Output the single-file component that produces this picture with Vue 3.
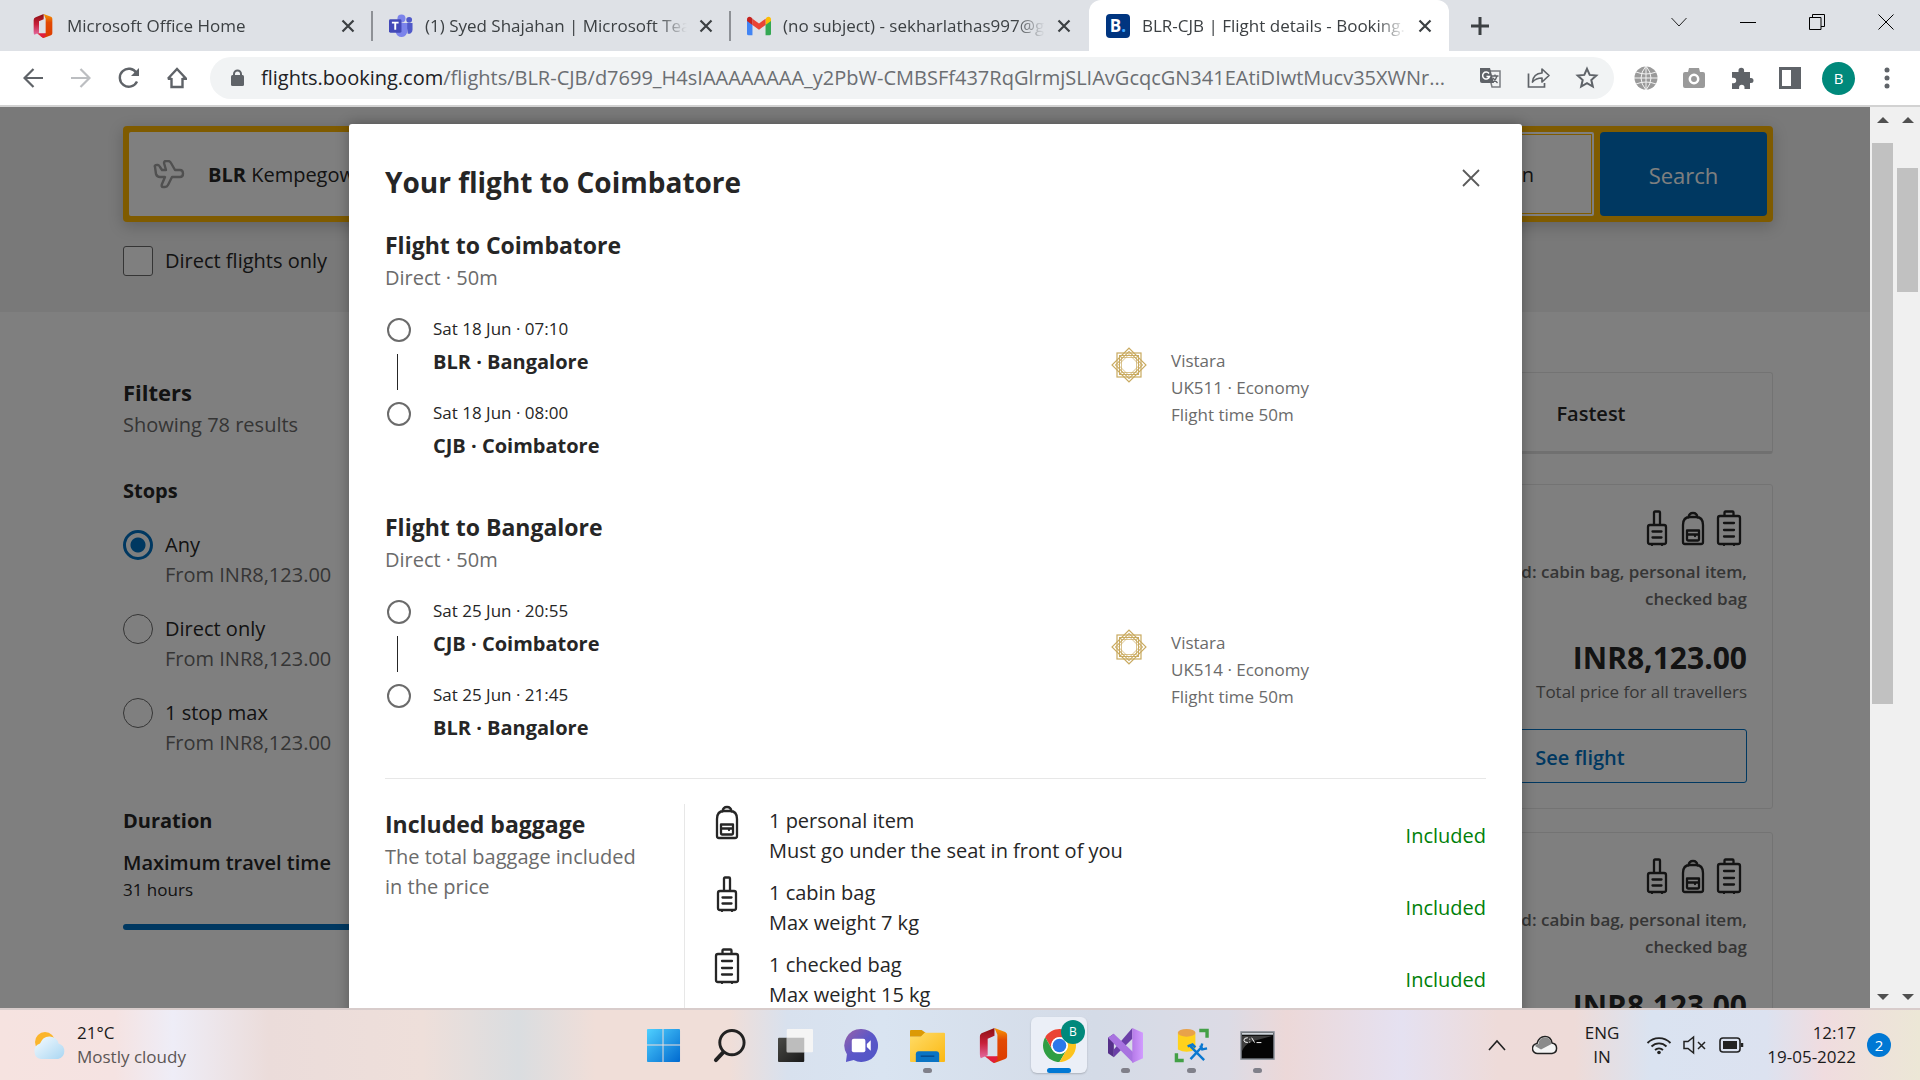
<script setup>
import { ref } from 'vue'

const tabs = [
  { icon: 'office', title: 'Microsoft Office Home' },
  { icon: 'teams', title: '(1) Syed Shajahan | Microsoft Teams' },
  { icon: 'gmail', title: '(no subject) - sekharlathas997@gmail.com' },
  { icon: 'booking', title: 'BLR-CJB | Flight details - Booking.com', active: true }
]

const urlPath = ref('/flights/BLR-CJB/d7699_H4sIAAAAAAAA_y2PbW-CMBSFf437RqGlrmjSLIAvGcqcGN341EAtiDIwtMucv35XWNr...')

const stops = [
  { id: 'any', label: 'Any' },
  { id: 'direct', label: 'Direct only' },
  { id: 'one', label: '1 stop max' }
]
const stop = ref('any')
const direct = ref(false)
const maxHours = ref(31)

const segments = [
  {
    title: 'Flight to Coimbatore',
    flight: 'UK511',
    points: [
      { time: 'Sat 18 Jun · 07:10', city: 'BLR · Bangalore' },
      { time: 'Sat 18 Jun · 08:00', city: 'CJB · Coimbatore' }
    ]
  },
  {
    title: 'Flight to Bangalore',
    flight: 'UK514',
    points: [
      { time: 'Sat 25 Jun · 20:55', city: 'CJB · Coimbatore' },
      { time: 'Sat 25 Jun · 21:45', city: 'BLR · Bangalore' }
    ]
  }
]

const bags = [
  { icon: 'backpack', name: '1 personal item', note: 'Must go under the seat in front of you' },
  { icon: 'cabin', name: '1 cabin bag', note: 'Max weight 7 kg' },
  { icon: 'suitcase', name: '1 checked bag', note: 'Max weight 15 kg' }
]

const apps = [
  { icon: 'windows', label: 'Start' },
  { icon: 'magnifier', label: 'Search' },
  { icon: 'taskview', label: 'Task view' },
  { icon: 'chat', label: 'Chat' },
  { icon: 'folder', label: 'File Explorer', open: true },
  { icon: 'office', label: 'Office' },
  { icon: 'chrome', label: 'Chrome', active: true },
  { icon: 'vs', label: 'Visual Studio', open: true },
  { icon: 'ssms', label: 'SQL Server Management Studio', open: true },
  { icon: 'cmd', label: 'Command Prompt', open: true }
]
</script>

<template>
  <div class="desktop">
    <svg class="sprite" aria-hidden="true">
      <defs>
        <linearGradient id="gOffL" x1="0" y1="0" x2="0" y2="1"><stop offset="0" stop-color="#8a0f12" /><stop offset=".5" stop-color="#c8203a" /><stop offset="1" stop-color="#e36aa0" /></linearGradient>
        <linearGradient id="gOffR" x1="0" y1="0" x2="0" y2="1"><stop offset="0" stop-color="#f89a05" /><stop offset=".35" stop-color="#e24a03" /><stop offset="1" stop-color="#dc3b00" /></linearGradient>
        <linearGradient id="gWin" x1="0" y1="0" x2="1" y2="1"><stop offset="0" stop-color="#4fd0ff" /><stop offset="1" stop-color="#0069cf" /></linearGradient>
        <linearGradient id="gChat" x1="0" y1="0" x2="1" y2="1"><stop offset="0" stop-color="#9a62a8" /><stop offset=".5" stop-color="#5b57c8" /><stop offset="1" stop-color="#4f55c6" /></linearGradient>
        <linearGradient id="gFolder" x1="0" y1="0" x2="1" y2="1"><stop offset="0" stop-color="#ffdc68" /><stop offset="1" stop-color="#fbb812" /></linearGradient>
        <linearGradient id="gCloud" x1="0" y1="0" x2="1" y2="1"><stop offset="0" stop-color="#f6fbff" /><stop offset="1" stop-color="#a9d6f2" /></linearGradient>
        <linearGradient id="gDark" x1="0" y1="0" x2="1" y2="1"><stop offset="0" stop-color="#4a4a46" /><stop offset="1" stop-color="#191919" /></linearGradient>
        <linearGradient id="gVs" x1="0" y1="0" x2="1" y2="0"><stop offset="0" stop-color="#b57ae8" /><stop offset="1" stop-color="#d29cff" /></linearGradient>
      </defs>
      <symbol id="i-office" viewBox="0 0 28 36">
        <path d="M15 0v8l-7 3v17l-7 3q-1-1-1-4V9q0-3 3-4z" fill="url(#gOffL)" />
        <path d="M15 0 26 4q2 1 2 3v22q0 2-2 3l-11 4-5-3 8-4V7z" fill="url(#gOffR)" />
        <path d="M5 29h13v4l-4 3z" fill="#e01e3c" />
      </symbol>
      <symbol id="i-teams" viewBox="0 0 25 24">
        <circle cx="21" cy="5.5" r="3" fill="#5059c9" /><circle cx="13" cy="4.2" r="4.2" fill="#7b83eb" />
        <path d="M18 9h6.500v7a4 4 0 0 1-5 4z" fill="#5059c9" /><path d="M7 9h12v8a6 6 0 0 1-12 1z" fill="#7b83eb" />
        <rect y="5" width="13" height="14" rx="1.500" fill="#4349b8" /><path d="M3 8.500h7M6.500 8.500v7.500" stroke="#fff" stroke-width="2" />
      </symbol>
      <symbol id="i-gmail" viewBox="0 0 22 17">
        <path d="M0 3v12.500Q0 17 1.500 17H5V7z" fill="#4285f4" /><path d="M22 3v12.500q0 1.500-1.500 1.500H17V7z" fill="#34a853" />
        <path d="M17 2v5.500L22 4V2.500C22 0 19.500-.5 18 .8z" fill="#fbbc04" /><path d="M5 7.500V1.800l6 4.500 6-4.500v5.700l-6 4.500z" fill="#ea4335" /><path d="M0 2.500V4l5 3.500V1.800L4 .8C2.500-.5 0 0 0 2.500" fill="#c5221f" />
      </symbol>
      <symbol id="i-x" viewBox="0 0 14 14"><path d="M1.500 1.500l11 11M12.500 1.500l-11 11" stroke="currentColor" stroke-width="2.200" fill="none" /></symbol>
      <symbol id="i-backpack" viewBox="0 0 36 36" fill="none" stroke="currentColor" stroke-width="2.300" stroke-linecap="round" stroke-linejoin="round">
        <path d="M13.500 7.500Q14 3 18 3t4.500 4.500M8 32V15q0-8 7-8h6q7 0 7 8v17q0 2-2 2H10q-2 0-2-2z" /><path d="M12 20.500h12v9q0 1-1 1H13q-1 0-1-1zM12 24.500h12M20 24.500v1.500" />
      </symbol>
      <symbol id="i-cabin" viewBox="0 0 36 36" fill="none" stroke="currentColor" stroke-width="2.300" stroke-linecap="round" stroke-linejoin="round">
        <path d="M15 15V2.500q0-1 1-1h4q1 0 1 1V15M11 15h14q2 0 2 2v15q0 2-2 2H11q-2 0-2-2V17q0-2 2-2zM13.500 21.500h9M13.500 27.500h9M13 34v1M23 34v1" />
      </symbol>
      <symbol id="i-suitcase" viewBox="0 0 36 36" fill="none" stroke="currentColor" stroke-width="2.300" stroke-linecap="round" stroke-linejoin="round">
        <path d="M13.500 5.500v-3q0-1 1-1h7q1 0 1 1v3M9 6h18q2 0 2 2v24q0 2-2 2H9q-2 0-2-2V8q0-2 2-2zM13 13h10M13 20h10M13 26.500h10M13 34v1M23 34v1" />
      </symbol>
      <symbol id="i-vistara" viewBox="0 0 36 36" fill="none" stroke="#c9aa60">
        <g id="vsq"><rect x="6" y="6" width="24" height="24" stroke-width="1.200" /><rect x="8.500" y="8.500" width="19" height="19" stroke-width="1" /><rect x="10.500" y="10.500" width="15" height="15" stroke-width=".7" /></g>
        <use href="#vsq" transform="rotate(45 18 18)" />
      </symbol>
      <symbol id="i-windows" viewBox="0 0 36 36"><path d="M2 1h15v16H1V2q0-1 1-1M18 1h16q1 0 1 1v15H18zM1 18h16v17H2q-1 0-1-1zM18 18h17v16q0 1-1 1H18z" fill="url(#gWin)" /></symbol>
      <symbol id="i-magnifier" viewBox="0 0 36 36" fill="none" stroke="#222"><circle cx="20.500" cy="15" r="12.500" stroke-width="3" /><path d="M11.500 25 4 33" stroke-width="4" stroke-linecap="round" /></symbol>
      <symbol id="i-taskview" viewBox="0 0 36 36"><rect y="10" width="27" height="25" rx="1" fill="url(#gDark)" /><rect x="9" y="1" width="27" height="24" rx="1" fill="#f5f5f5" /><path d="M9 10h18v15H9z" fill="#bdbdbd" /></symbol>
      <symbol id="i-chat" viewBox="0 0 36 36"><path d="M18 1a17 17 0 1 1-8 32l-8 2 1-8A17 17 0 0 1 18 1" fill="url(#gChat)" /><rect x="8" y="11" width="14" height="14" rx="2" fill="#fff" /><path d="m23.500 16.500 4-4v11l-4-4z" fill="#fff" /></symbol>
      <symbol id="i-folder" viewBox="0 0 36 36"><path d="M1 2h11l4 3-4 4H0V3q0-1 1-1" fill="#dc9a05" /><path d="M0 9h11l4-4h20q1 0 1 1v28q0 1-1 1H1q-1 0-1-1z" fill="url(#gFolder)" /><path d="M6 35v-8q0-3 3-3h18q3 0 3 3v8z" fill="#0a74c4" /><path d="M11 29h14" stroke="#064a8c" stroke-width="1.500" /></symbol>
      <symbol id="i-chrome" viewBox="0 0 36 36"><circle cx="18" cy="18" r="17" fill="#fff" /><path d="M3.300 9.500A17 17 0 0 1 32.700 9.500H18a8.500 8.500 0 0 0-7.400 12.750z" fill="#ea4335" /><path d="M3.300 9.500A17 17 0 0 0 18 35l7.400-12.750a8.500 8.500 0 0 1-14.800 0z" fill="#2f9e44" /><path d="M32.700 9.500A17 17 0 0 1 18 35l7.400-12.750A8.500 8.500 0 0 0 18 9.500z" fill="#fcc31e" /><circle cx="18" cy="18" r="8.500" fill="#fff" /><circle cx="18" cy="18" r="7" fill="#2b78ea" /></symbol>
      <symbol id="i-vs" viewBox="0 0 36 36"><path d="M0 10l6-4v24l-6-4z" fill="#553089" /><path d="M6 22 25 0v11L6 30z" fill="#6b3fa8" /><path d="m0 10 6-4 20 19v11z" fill="#a873e0" /><path d="m25 0 11 5v26l-11 5z" fill="url(#gVs)" /></symbol>
      <symbol id="i-ssms" viewBox="0 0 36 36"><path d="M4 5v17q9 5 18 0V5z" fill="#ffd21c" /><ellipse cx="13" cy="5" rx="9" ry="4" fill="#e8a24a" /><path d="M26 2.500h8V10M2.500 26v7.500H10" fill="none" stroke="#43a047" stroke-width="3.500" /><path d="M17 32 29 19M17 19l14 14M14 19l5-2 3 3M27 18l2 4 5-1M29 16l-1 4" fill="none" stroke="#0a78d0" stroke-width="2.500" /></symbol>
      <symbol id="i-cmd" viewBox="0 0 36 36"><rect x="1" y="4" width="34" height="28" fill="#050505" stroke="#8d939c" stroke-width="1.500" /><path d="M2 5h32v2H2z" fill="#cdd3da" /><path d="M2 8h32L12 14Q4 18 2 24z" fill="#3d3d3d" /><path d="M8 10q-4 0-4 2.500T8 15M10 11v1M10 14v1M12 10l3 5M17 15h5" fill="none" stroke="#fff" /></symbol>
    </svg>

    <header class="tabstrip">
      <div v-for="tab in tabs" :key="tab.icon" class="tab" :class="{ active: tab.active }">
        <span v-if="tab.icon === 'booking'" class="fav booking-mark">B<i>.</i></span>
        <svg v-else class="fav"><use :href="'#i-' + tab.icon" /></svg>
        <span class="tab-title">{{ tab.title }}</span>
        <button class="tab-close" aria-label="Close tab"><svg width="14" height="14"><use href="#i-x" /></svg></button>
      </div>
      <button class="new-tab" aria-label="New tab"><svg width="18" height="18"><path d="M9 0v18M0 9h18" stroke="#3c4043" stroke-width="3" /></svg></button>
      <div class="window-controls">
        <button aria-label="Search tabs"><svg width="16" height="16" fill="none" stroke="#222"><path d="m.5 4 7.500 8 7.500-8" /></svg></button>
        <button aria-label="Minimise"><svg width="16" height="16"><path d="M0 8.500h16" stroke="#000" /></svg></button>
        <button aria-label="Restore"><svg width="16" height="16" fill="none" stroke="#000"><path d="M.5 3.500h11.500v12H.5zM3.500 3.500v-3h12v12H12" /></svg></button>
        <button aria-label="Close window"><svg width="16" height="16" fill="none" stroke="#000"><path d="m.5.5 15 15m0-15-15 15" /></svg></button>
      </div>
    </header>

    <nav class="toolbar">
      <button aria-label="Back"><svg width="20" height="20" fill="none" stroke="#5f6368" stroke-width="2.200"><path d="M20 10H2M10.500 1 1.500 10l9 9" /></svg></button>
      <button aria-label="Forward"><svg width="20" height="20" fill="none" stroke="#bcbec1" stroke-width="2.200"><path d="M0 10h18M9.500 1l9 9-9 9" /></svg></button>
      <button aria-label="Reload"><svg width="22" height="22" fill="none" stroke="#5f6368" stroke-width="2.400"><path d="M19 14.500A9 9 0 1 1 18.500 6" /><path d="M21 1v8h-8z" fill="#5f6368" stroke="none" /></svg></button>
      <button aria-label="Home"><svg width="20" height="22" fill="none" stroke="#5f6368" stroke-width="2.400"><path d="M4.500 11v9h11v-9M.8 11.800 10 2l9.200 9.800H15.500M.8 11.800h3.700" /></svg></button>
      <div class="omnibox">
        <svg width="14" height="18"><rect y="6" width="13" height="11" rx="1.500" fill="#5f6368" /><path d="M3 7V5a3.500 3.500 0 0 1 7 0v2" fill="none" stroke="#5f6368" stroke-width="2" /></svg>
        <label for="url">flights.booking.com</label>
        <input id="url" v-model="urlPath" type="text" spellcheck="false">
        <button aria-label="Translate"><svg width="24" height="24"><path d="M9 5h12v16H13z" fill="none" stroke="#7a7d81" stroke-width="1.500" /><path d="M1 2h10l4 15H3q-2 0-2-2z" fill="#5f6368" /><path d="M10 7.500a3.500 3.500 0 1 0 .5 3H7.500" fill="none" stroke="#fff" stroke-width="1.500" /><path d="M12.500 10h7M16 8.500V10M18 10q-1 4-4.500 6.500M14 12l4.500 5" fill="none" stroke="#5f6368" stroke-width="1.300" /></svg></button>
        <button aria-label="Share"><svg width="24" height="24" fill="none" stroke="#5f6368" stroke-width="1.700"><path d="M1.500 7.500v13.500h16v-4" /><path d="M5.500 16q.8-8.500 9.500-9V3l7 6.500-7 6.500v-4q-6 0-9.500 4z" stroke-linejoin="round" /></svg></button>
        <button aria-label="Bookmark"><svg width="24" height="24" fill="none" stroke="#5f6368" stroke-width="2"><path d="m12 2.800 2.700 6.100 6.600.7-5 4.400 1.500 6.500-5.800-3.400-5.800 3.400 1.500-6.500-5-4.400 6.600-.7z" /></svg></button>
      </div>
      <button aria-label="Web extension"><svg width="24" height="24"><circle cx="12" cy="12" r="11.500" fill="#9a9a9a" /><path d="M12 0v24M0 12h24M2 6q10 4 20 0M2 18q10-4 20 0M12 0Q2 12 12 24M12 0q10 12 0 24" fill="none" stroke="#f2f2f2" /></svg></button>
      <button aria-label="Camera extension"><svg width="24" height="24"><path d="M7 2h10l1 4h3q2 0 2 2v12q0 2-2 2H3q-2 0-2-2V8q0-2 2-2h3z" fill="#9a9a9a" /><circle cx="12" cy="13" r="4.200" fill="#9a9a9a" stroke="#fff" stroke-width="2.500" /></svg></button>
      <button aria-label="Extensions"><svg width="24" height="24"><path d="M2 6h6.500V4.500a2.800 2.800 0 0 1 5.600 0V6H20v6h1a2.500 2.500 0 0 1 0 5h-1v6h-5.500v-1.500a2.700 2.700 0 0 0-5.400 0V23H2v-5.800h1.500a2.700 2.700 0 0 0 0-5.400H2z" fill="#5f6368" /></svg></button>
      <button aria-label="Side panel"><svg width="22" height="22"><path d="M0 0h22v22H0zM3 3v16h9V3z" fill="#5f6368" fill-rule="evenodd" /></svg></button>
      <button class="avatar" aria-label="Profile">B</button>
      <button aria-label="Menu"><svg width="6" height="22" fill="#5f6368"><circle cx="3" cy="3" r="2.500" /><circle cx="3" cy="11" r="2.500" /><circle cx="3" cy="19" r="2.500" /></svg></button>
    </nav>

    <main class="viewport">
      <div class="page">
        <div class="site">
          <section class="search-area">
            <div class="search-bar">
              <button class="field from">
                <svg width="32" height="30" fill="none" stroke="#a0a0a0" stroke-width="2.400" stroke-linejoin="round"><path d="M2 7q-1-2 2-2h1q1 0 2 2l2 3h4l-2-7q0-2 2-2h2q2 0 3 2l4 7h5q3 0 3 3.500T27 17h-8l-4 8q-1 2-3 2h-2q-2 0-1-3l3-7H7q-3 0-4-3z" /></svg>
                <span><b>BLR</b> Kempegowda</span>
              </button>
              <button class="field dates">Sat 25 Jun</button>
              <button class="search-btn">Search</button>
            </div>
            <label class="check"><input v-model="direct" type="checkbox">Direct flights only</label>
          </section>

          <div class="columns">
            <aside class="filters">
              <h2>Filters</h2>
              <p class="muted">Showing 78 results</p>
              <fieldset>
                <legend>Stops</legend>
                <label v-for="s in stops" :key="s.id" class="radio">
                  <input v-model="stop" type="radio" name="stops" :value="s.id">
                  <span>{{ s.label }}<small>From INR8,123.00</small></span>
                </label>
              </fieldset>
              <h3>Duration</h3>
              <label class="slider-label" for="travel">Maximum travel time</label>
              <p class="hours">31 hours</p>
              <input id="travel" v-model="maxHours" type="range" min="1" max="31">
            </aside>

            <section class="results">
              <div class="sort"><button>Fastest</button></div>
              <article v-for="n in 2" :key="n" class="card">
                <div class="offer">
                  <div class="bag-icons">
                    <svg><use href="#i-cabin" /></svg><svg><use href="#i-backpack" /></svg><svg><use href="#i-suitcase" /></svg>
                  </div>
                  <p class="bag-text">Included: cabin bag, personal item, checked bag</p>
                  <p class="price">INR8,123.00</p>
                  <p class="total">Total price for all travellers</p>
                  <button class="see">See flight</button>
                </div>
              </article>
            </section>
          </div>
        </div>

        <div class="overlay">
          <div class="backdrop">
            <section class="modal" role="dialog" aria-labelledby="dlg-title">
              <div class="modal-head">
                <h1 id="dlg-title">Your flight to Coimbatore</h1>
                <button aria-label="Close"><svg width="18" height="18" fill="none" stroke="#5a5a5a" stroke-width="1.800"><path d="m1 1 16 16M17 1 1 17" /></svg></button>
              </div>
              <section v-for="seg in segments" :key="seg.title" class="segment">
                <h2>{{ seg.title }}</h2>
                <p class="muted">Direct · 50m</p>
                <div class="leg">
                  <ol class="timeline">
                    <li v-for="p in seg.points" :key="p.time">
                      <span class="marker"></span>
                      <div><time>{{ p.time }}</time><strong>{{ p.city }}</strong></div>
                    </li>
                  </ol>
                  <div class="airline">
                    <svg><use href="#i-vistara" /></svg>
                    <p>Vistara<br>{{ seg.flight }} · Economy<br>Flight time 50m</p>
                  </div>
                </div>
              </section>
              <section class="baggage">
                <div class="baggage-intro">
                  <h2>Included baggage</h2>
                  <p class="muted">The total baggage included in the price</p>
                </div>
                <ul>
                  <li v-for="bag in bags" :key="bag.icon">
                    <svg><use :href="'#i-' + bag.icon" /></svg>
                    <p>{{ bag.name }}<br>{{ bag.note }}</p>
                    <span>Included</span>
                  </li>
                </ul>
              </section>
            </section>
          </div>
          <div class="scrollbar inner"><i class="up"></i><b></b><i class="down"></i></div>
        </div>
      </div>
      <div class="scrollbar outer"><i class="up"></i><b></b><i class="down"></i></div>
    </main>

    <footer class="taskbar">
      <button class="weather">
        <svg width="34" height="32"><circle cx="12" cy="13" r="10" fill="#fbb52c" /><path d="M8 30a8 8 0 0 1-1-15.500Q10 7 17 7.500q7 .5 8.500 7A8 8 0 0 1 25 30z" fill="url(#gCloud)" /></svg>
        <span>21°C<br><em>Mostly cloudy</em></span>
      </button>
      <div class="apps">
        <button v-for="app in apps" :key="app.label" :aria-label="app.label" :class="{ active: app.active, open: app.open }">
          <svg :class="{ narrow: app.icon === 'office' }"><use :href="'#i-' + app.icon" /></svg>
          <span v-if="app.active" class="profile">B</span>
        </button>
      </div>
      <div class="tray">
        <button aria-label="Hidden icons"><svg width="18" height="12" fill="none" stroke="#222" stroke-width="1.600"><path d="m1 11 8-9 8 9" /></svg></button>
        <button class="onedrive" aria-label="OneDrive"><svg width="26" height="20"><path d="M6 18.500A5 5 0 0 1 5 8.500Q7 1.500 13 1.500T20 8a5.300 5.300 0 0 1 0 10.500z" fill="#f4f4f4" stroke="#222" stroke-width="1.500" /><path d="M3 11q1-2 3.500-2Q7 2.500 13 2.500T19.500 9L9 14.500z" fill="#8a8a8a" /></svg></button>
        <button class="lang">ENG<br>IN</button>
        <button class="status" aria-label="Network, sound, battery">
          <svg width="26" height="20" fill="none" stroke="#222" stroke-width="1.800"><path d="M1.500 8a16 16 0 0 1 23 0M5.500 11.500a10.500 10.500 0 0 1 15 0M9 15a6 6 0 0 1 8 0" /><circle cx="13" cy="17.500" r="1.800" fill="#222" stroke="none" /></svg>
          <svg width="26" height="20" fill="none" stroke="#222" stroke-width="1.500"><path d="M2 6.500h4L11.500 2v16L6 13.500H2zM16 7l7 7M23 7l-7 7" /></svg>
          <svg width="26" height="20" fill="none" stroke="#222" stroke-width="1.600"><rect x="2" y="3" width="20" height="14" rx="3" /><rect x="5" y="6" width="14" height="8" fill="#222" stroke="none" /><path d="M24 8v4" stroke-width="2.500" /></svg>
        </button>
        <button class="clock">12:17<br>19-05-2022</button>
        <span class="badge">2</span>
      </div>
    </footer>
  </div>
</template>

<style>
html, body { margin: 0; background: #fff; overflow: hidden; }
</style>

<style scoped>
* { box-sizing: border-box; margin: 0; padding: 0; }
.desktop { height: 100vh; display: flex; flex-direction: column; overflow: hidden; font: 20px/30px "Open Sans", "Noto Sans", sans-serif; color: #262626; }
.sprite { position: absolute; width: 0; height: 0; }
button, input { font: inherit; color: inherit; background: none; border: 0; }
svg { display: block; flex: none; }
ul, ol { list-style: none; }

.tabstrip { display: flex; height: 51px; background: #dee1e6; padding-left: 15px; font-size: 17px; color: #3c4043; flex: none; }
.tab { display: flex; align-items: center; width: 358px; padding: 0 16px; border-right: 2px solid #8e9196; border-image: linear-gradient(transparent 12px, #8e9196 12px, #8e9196 40px, transparent 40px) 1; }
.tab:nth-child(3) { border-color: transparent; border-image: none; }
.tab.active { width: 360px; background: #fff; border: 0; border-radius: 12px 12px 0 0; padding: 0 17px; }
.fav { width: 24px; height: 24px; flex: none; }
.booking-mark { background: #003580; color: #fff; border-radius: 4px; font-weight: 700; font-size: 17px; line-height: 23px; text-align: center; }
.booking-mark i { color: #3ba6ff; font-style: normal; }
.tab-title { flex: 1; margin: 0 12px; overflow: hidden; white-space: nowrap; -webkit-mask: linear-gradient(90deg, #000 calc(100% - 30px), transparent); mask: linear-gradient(90deg, #000 calc(100% - 30px), transparent); }
.tab-close { width: 14px; height: 14px; color: #3c4043; }
.new-tab { width: 62px; display: grid; place-items: center; }
.window-controls { margin-left: auto; display: flex; height: 43px; }
.window-controls button { width: 69px; display: grid; place-items: center; }

.toolbar { display: flex; align-items: center; height: 56px; flex: none; padding: 0 9px; border-bottom: 2px solid #d2d2d2; background: #fff; }
.toolbar button { width: 48px; display: grid; place-items: center; flex: none; }
.omnibox { flex: 1; display: flex; align-items: center; height: 42px; border-radius: 21px; background: #f1f3f4; margin: 0 8px 0 9px; padding: 0 3px 0 21px; color: #202124; }
.omnibox label { margin-left: 16px; }
.omnibox input { flex: 1; min-width: 0; color: #6b6e72; outline: 0; text-overflow: clip; }
.toolbar .avatar { height: 33px; width: 33px; margin: 0 8px; border-radius: 50%; background: #00897b; color: #fff; font-size: 15px; }

.viewport { flex: 1; min-height: 0; display: flex; }
.page { flex: 1; position: relative; overflow: hidden; background: #fff; }
.search-area { background: #f2f2f2; height: 205px; padding: 19px 122px 0 123px; }
.search-bar { display: flex; height: 96px; padding: 6px; gap: 6px; background: #ffb700; border-radius: 4px; box-shadow: 0 4px 16px rgba(0, 0, 0, .2); }
.search-bar button { padding-top: 2px; }
.field { flex: 1; display: flex; align-items: center; background: #fff; border-radius: 2px; }
.search-bar .from { gap: 23px; padding-left: 24px; }
.search-bar .dates { justify-content: flex-end; padding-right: 60px; outline: 1px solid #ffb700; outline-offset: -3px; }
.search-btn { width: 167px; background: #0071c2; color: #fff; font-size: 22px; border-radius: 4px; }
.check { display: inline-flex; gap: 12px; align-items: center; margin-top: 24px; }
.check input { appearance: none; width: 30px; height: 30px; border: 1px solid #6b6b6b; border-radius: 3px; background: #fff; }
.columns { display: flex; padding: 60px 122px 0 123px; }
.filters { flex: 1; padding-top: 5px; }
.filters h2 { font-size: 22px; line-height: 30px; }
.muted { color: #6b6b6b; margin-top: 3px; }
fieldset { border: 0; margin-top: 36px; }
legend, h3 { font-size: 20px; font-weight: 700; line-height: 30px; }
.radio { display: flex; gap: 12px; margin-top: 24px; }
.radio input { appearance: none; width: 30px; height: 30px; border: 1px solid #6b6b6b; border-radius: 50%; }
.radio input:checked { border: 3px solid #0071c2; background: radial-gradient(circle, #0071c2 7px, transparent 8px); }
.radio small { display: block; font-size: 20px; color: #6b6b6b; }
h3 { margin-top: 48px; }
.slider-label { display: block; font-weight: 600; margin-top: 12px; }
.hours { font-size: 17px; line-height: 24px; }
#travel { appearance: none; display: block; width: 400px; height: 6px; margin-top: 22px; border-radius: 3px; background: #0071c2; }
#travel::-webkit-slider-thumb { appearance: none; width: 24px; height: 24px; border-radius: 50%; background: #0071c2; }
.results { width: 1086px; }
.sort { border: 1px solid #e7e7e7; border-bottom: 3px solid #e0e0e0; border-radius: 3px; height: 82px; display: flex; justify-content: flex-end; }
.sort button { width: 362px; font-weight: 600; padding-top: 3px; }
.card { border: 1px solid #e7e7e7; border-radius: 3px; height: 325px; margin-top: 30px; display: flex; justify-content: flex-end; padding: 25px; }
.card + .card { margin-top: 23px; }
.offer { width: 334px; text-align: right; }
.bag-icons { display: flex; justify-content: flex-end; }
.bag-icons svg, .baggage svg, .airline svg { width: 36px; height: 36px; }
.bag-text { font-size: 17px; font-weight: 600; line-height: 27px; margin-top: 12px; color: #6b6b6b; }
.price { font-size: 30px; line-height: 40px; font-weight: 700; margin-top: 26px; }
.total { font-size: 17px; line-height: 27px; color: #6b6b6b; }
.see { width: 100%; height: 54px; border: 1px solid #0071c2; border-radius: 3px; color: #0071c2; font-weight: 600; margin-top: 24px; padding-top: 3px; }

.overlay { position: absolute; inset: 0; display: flex; }
.backdrop { flex: 1; background: rgba(0, 0, 0, .5); padding: 17px 348px 0 349px; }
.modal { background: #fff; border-radius: 3px; padding: 38px 36px 40px; box-shadow: 0 0 14px rgba(0, 0, 0, .3); }
.modal-head { display: flex; justify-content: space-between; align-items: flex-start; }
h1 { font-size: 28px; line-height: 40px; }
.modal-head button { width: 30px; height: 32px; display: grid; place-items: center; }
.segment { margin-top: 28px; }
.segment + .segment { margin-top: 51px; }
.modal h2 { font-size: 23px; line-height: 30px; }
.leg { display: flex; align-items: center; justify-content: space-between; margin-top: 21px; }
.timeline { display: flex; flex-direction: column; gap: 21px; }
.timeline li { display: flex; position: relative; }
.marker { width: 24px; height: 24px; border: 2px solid #6b6b6b; border-radius: 50%; margin: 4px 22px 0 2px; }
.timeline li:first-child::after { content: ""; position: absolute; left: 12px; top: 40px; width: 1px; height: 36px; background: #262626; }
time { display: block; font-size: 17px; line-height: 30px; }
strong { display: block; margin-top: 3px; }
.airline { width: 375px; display: flex; gap: 24px; font-size: 17px; line-height: 27px; color: #6b6b6b; }
.baggage { display: flex; margin-top: 35px; padding-top: 25px; border-top: 1px solid #e7e7e7; }
.baggage-intro { width: 299px; padding: 5px 30px 0 0; }
.baggage ul { flex: 1; border-left: 1px solid #e7e7e7; padding: 2px 0 0 24px; }
.baggage li { display: flex; gap: 24px; margin-bottom: 12px; }
.baggage li svg { margin-top: -2px; }
.baggage li p { flex: 1; }
.baggage li span { align-self: center; color: #008009; }

.scrollbar { width: 25px; background: #f0f0f0; display: flex; flex-direction: column; align-items: center; padding: 10px 0 8px; flex: none; }
.scrollbar b { width: 21px; background: #c1c1c1; }
.inner b { height: 561px; margin-top: 20px; }
.outer b { height: 124px; margin-top: 45px; }
.scrollbar i { border: 6px solid transparent; }
.scrollbar .up { border-top: 0; border-bottom-color: #505050; }
.scrollbar .down { border-bottom: 0; border-top-color: #505050; margin-top: auto; }

.taskbar { height: 72px; flex: none; display: grid; grid-template-columns: 1fr auto 1fr; align-items: center; border-top: 2px solid #d8cccb; font-size: 17px; line-height: 24px; color: #1b1b1b;
  background: linear-gradient(90deg, #f6e3e0 0, #f5e3e2 6%, #eeedf7 9%, #ebdcda 14%, #eedfda 22%, #dadde0 27%, #f0ded8 31%, #f0ded8 38%, #d8e1ee 41%, #d9e4f1 46%, #d4dbe7 57%, #dcdbe5 64%, #ecd8d8 67%, #e5e1f1 73%, #eedbd9 78%, #eedbd8 82%, #dae3f1 86%, #dce2f0 92%, #f0dcdf 95%, #ece7d6 100%); }
.weather { display: flex; align-items: center; gap: 10px; padding-left: 33px; text-align: left; }
.weather em { font-style: normal; color: #5c5655; }
.apps { display: flex; gap: 10px; }
.apps button { position: relative; width: 56px; height: 56px; display: grid; place-items: center; border-radius: 6px; }
.apps svg { width: 35px; height: 35px; }
.apps svg.narrow { width: 29px; }
.apps .active { background: #ebeff7; box-shadow: 0 1px 2px rgba(0, 0, 0, .2); }
.apps .active::after, .apps .open::after { content: ""; position: absolute; bottom: 0; width: 9px; height: 5px; border-radius: 3px; background: #80808a; }
.apps .active::after { width: 24px; background: #0078d4; }
.profile { position: absolute; right: 2px; top: 3px; width: 24px; height: 24px; border-radius: 50%; background: #00897b; color: #fff; font-size: 12px; }
.tray { display: flex; align-items: center; justify-content: flex-end; padding-right: 29px; }
.onedrive { margin-left: 26px; }
.lang { width: 60px; margin-left: 14px; }
.status { display: flex; gap: 10px; margin-left: 14px; }
.clock { text-align: right; margin-left: 12px; width: 100px; }
.badge { width: 24px; height: 24px; border-radius: 50%; background: #0078d4; color: #fff; text-align: center; font-size: 15px; margin-left: 11px; }
</style>
